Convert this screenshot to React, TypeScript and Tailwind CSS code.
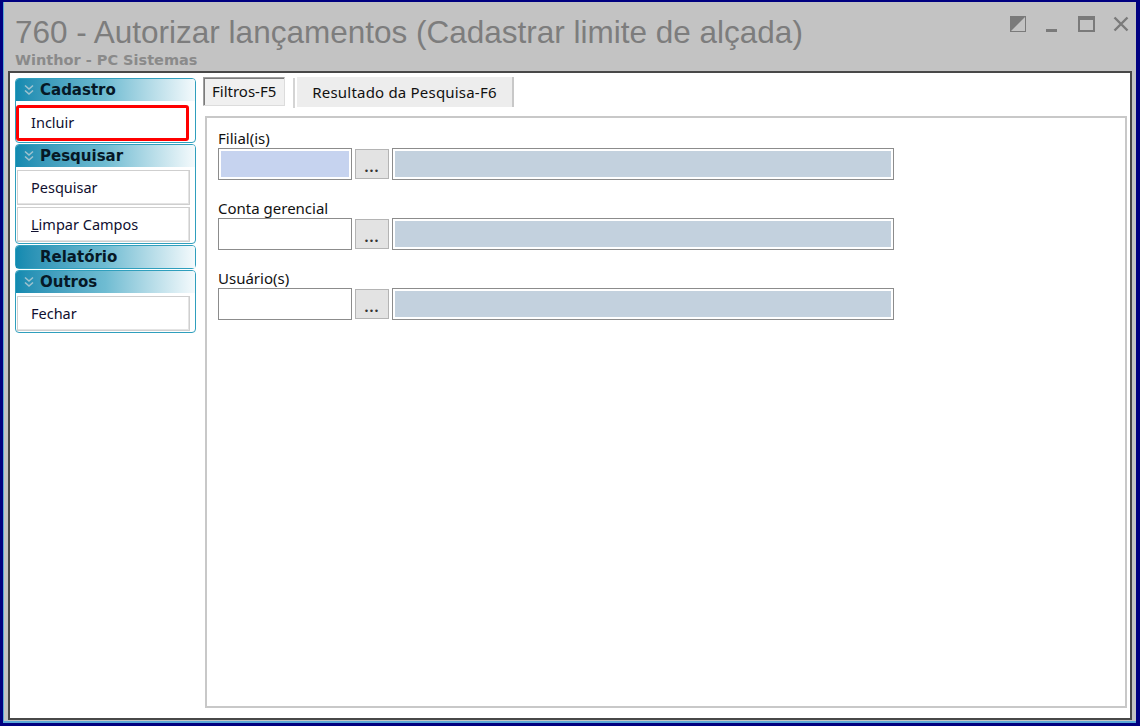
import React from 'react';

const uiFont = { fontFamily: '"Noto Sans", "DejaVu Sans", sans-serif' };

// Double chevron shown at the left of a sidebar group header
const Chevrons: React.FC = () => (
  <svg width="10" height="12" viewBox="0 0 10 12" className="shrink-0">
    <path d="M1 1.5 L5 5 L9 1.5" fill="none" stroke="#9fc3cf" strokeWidth="1.6" />
    <path d="M1 6.5 L5 10 L9 6.5" fill="none" stroke="#9fc3cf" strokeWidth="1.6" />
  </svg>
);

interface GroupProps {
  title: string;
  showChevron?: boolean;
  children?: React.ReactNode;
}

const SideGroup: React.FC<GroupProps> = ({ title, showChevron = true, children }) => (
  <div className="rounded-[4px] border border-[#2f9fbd] bg-white">
    <div className="flex h-[22px] items-center gap-[6px] rounded-t-[3px] bg-gradient-to-r from-[#118ab0] via-[#6fbcd2] to-[#f4fafc] pl-[8px]">
      {showChevron ? <Chevrons /> : <span className="w-[10px]" />}
      <span className="text-[15px] font-bold leading-none text-[#061826]" style={{ fontFamily: '"DejaVu Sans", sans-serif' }}>
        {title}
      </span>
    </div>
    {children && <div className="flex flex-col gap-[2px] px-[1px] pb-[1px] pt-[3px]">{children}</div>}
  </div>
);

const SideItem: React.FC<{ label: React.ReactNode; active?: boolean }> = ({ label, active }) => (
  <div
    className={
      active
        ? '-ml-[1px] mr-[5px] mt-[1px] flex h-[36px] items-center rounded-[3px] border-[3px] border-[#ff0000] bg-white pl-[12px] text-[14.5px] text-[#101030]'
        : 'mr-[4px] flex h-[35px] items-center border border-[#cfcfcf] bg-white pl-[13px] text-[14.5px] text-[#101030] shadow-[inset_-1px_-1px_0_#e4e4e4]'
    }
    style={uiFont}
  >
    {label}
  </div>
);

const FieldRow: React.FC<{ label: React.ReactNode; focused?: boolean }> = ({ label, focused }) => (
  <div className="flex flex-col">
    <div className="h-[19px] text-[15px] leading-[19px] text-[#111]" style={uiFont}>
      {label}
    </div>
    <div className="flex items-center gap-[3px]">
      <div className="h-[32px] w-[134px] border border-[#8c8c8c] bg-white p-[2px]">
        <div className={focused ? 'h-full w-full bg-[#c6d3ef]' : 'h-full w-full bg-white'} />
      </div>
      <div className="flex h-[30px] w-[34px] items-end justify-center border border-[#b4b4b4] bg-[#e3e3e3] pb-[4px] text-[14px] font-bold leading-none tracking-[1px] text-[#333]" style={uiFont}>
        ...
      </div>
      <div className="h-[32px] w-[502px] border border-[#8c8c8c] p-[2px]">
        <div className="h-full w-full bg-[#c3d1de]" />
      </div>
    </div>
  </div>
);

export default function App() {
  return (
    <div className="h-[726px] w-[1140px] overflow-hidden bg-[#000080] pb-[3px] pl-[3px] pr-[4px] pt-[2px]">
      <div className="flex h-full w-full flex-col border-b-[2px] border-l border-[#5aa8d8] bg-[#c3c3c3]">
        {/* Title bar */}
        <div className="relative h-[69px] shrink-0">
          <div
            className="absolute left-[11px] top-[12px] text-[31.5px] leading-[36px] text-[#7d7d7d]"
            style={{ fontFamily: '"Liberation Sans", Arial, sans-serif' }}
          >
            760 - Autorizar lançamentos (Cadastrar limite de alçada)
          </div>
          <div
            className="absolute left-[11px] top-[50px] text-[14.5px] font-bold leading-[16px] text-[#8a8a8a]"
            style={{ fontFamily: '"DejaVu Sans", sans-serif' }}
          >
            Winthor - PC Sistemas
          </div>
          {/* Window controls */}
          <div className="absolute right-[7px] top-[14px] flex items-center gap-[18px]">
            <svg width="16" height="16" viewBox="0 0 16 16">
              <rect x="0.5" y="0.5" width="15" height="15" fill="none" stroke="#7a7a7a" />
              <path d="M1 1 H15 L1 15 Z" fill="#7a7a7a" />
            </svg>
            <svg width="16" height="16" viewBox="0 0 16 16">
              <rect x="2" y="13" width="11" height="3" fill="#7a7a7a" />
            </svg>
            <svg width="17" height="16" viewBox="0 0 17 16">
              <rect x="1" y="1" width="15" height="14" fill="none" stroke="#7a7a7a" strokeWidth="2" />
              <rect x="1" y="1" width="15" height="3" fill="#7a7a7a" />
            </svg>
            <svg width="16" height="16" viewBox="0 0 16 16">
              <path d="M1.5 1.5 L14.5 14.5 M14.5 1.5 L1.5 14.5" stroke="#7a7a7a" strokeWidth="2.4" />
            </svg>
          </div>
        </div>

        {/* Content */}
        <div className="mx-[4px] mb-[1px] flex flex-1 border-2 border-[#484848] bg-white">
          {/* Sidebar */}
          <div className="flex w-[186px] shrink-0 flex-col gap-[1px] pl-[5px] pt-[5px]">
            <SideGroup title="Cadastro">
              <SideItem label="Incluir" active />
            </SideGroup>
            <SideGroup title="Pesquisar">
              <SideItem label="Pesquisar" />
              <SideItem
                label={
                  <span>
                    <span className="underline">L</span>impar Campos
                  </span>
                }
              />
            </SideGroup>
            <SideGroup title="Relatório" showChevron={false} />
            <SideGroup title="Outros">
              <SideItem label="Fechar" />
            </SideGroup>
          </div>

          {/* Main */}
          <div className="flex flex-1 flex-col pb-[10px] pl-[7px] pr-[3px] pt-[4px]">
            <div className="flex h-[32px] items-start text-[15px] text-[#111]" style={uiFont}>
              <div className="flex h-[29px] items-center border border-[#a0a0a0] border-b-[#dcdcdc] border-r-[#dcdcdc] bg-[#f0f0f0] px-[8px] shadow-[inset_1px_1px_0_#7c7c7c]">
                Filtros-F5
              </div>
              <div className="ml-[8px] mt-[1px] h-[30px] w-[2px] bg-[#d4d4d4]" />
              <div className="ml-[2px] flex h-[30px] items-center bg-[#ededed] px-[15px] tracking-[0.2px]">Resultado da Pesquisa-F6</div>
              <div className="h-[30px] w-[2px] bg-[#c8c8c8]" />
            </div>
            <div className="ml-[2px] mt-[7px] flex flex-1 flex-col gap-[19px] border-2 border-[#c8c8c8] pl-[11px] pt-[11px]">
              <FieldRow label="Filial(is)" focused />
              <FieldRow label="Conta gerencial" />
              <FieldRow label="Usuário(s)" />
            </div>
          </div>
        </div>
      </div>
    </div>
  );
}
